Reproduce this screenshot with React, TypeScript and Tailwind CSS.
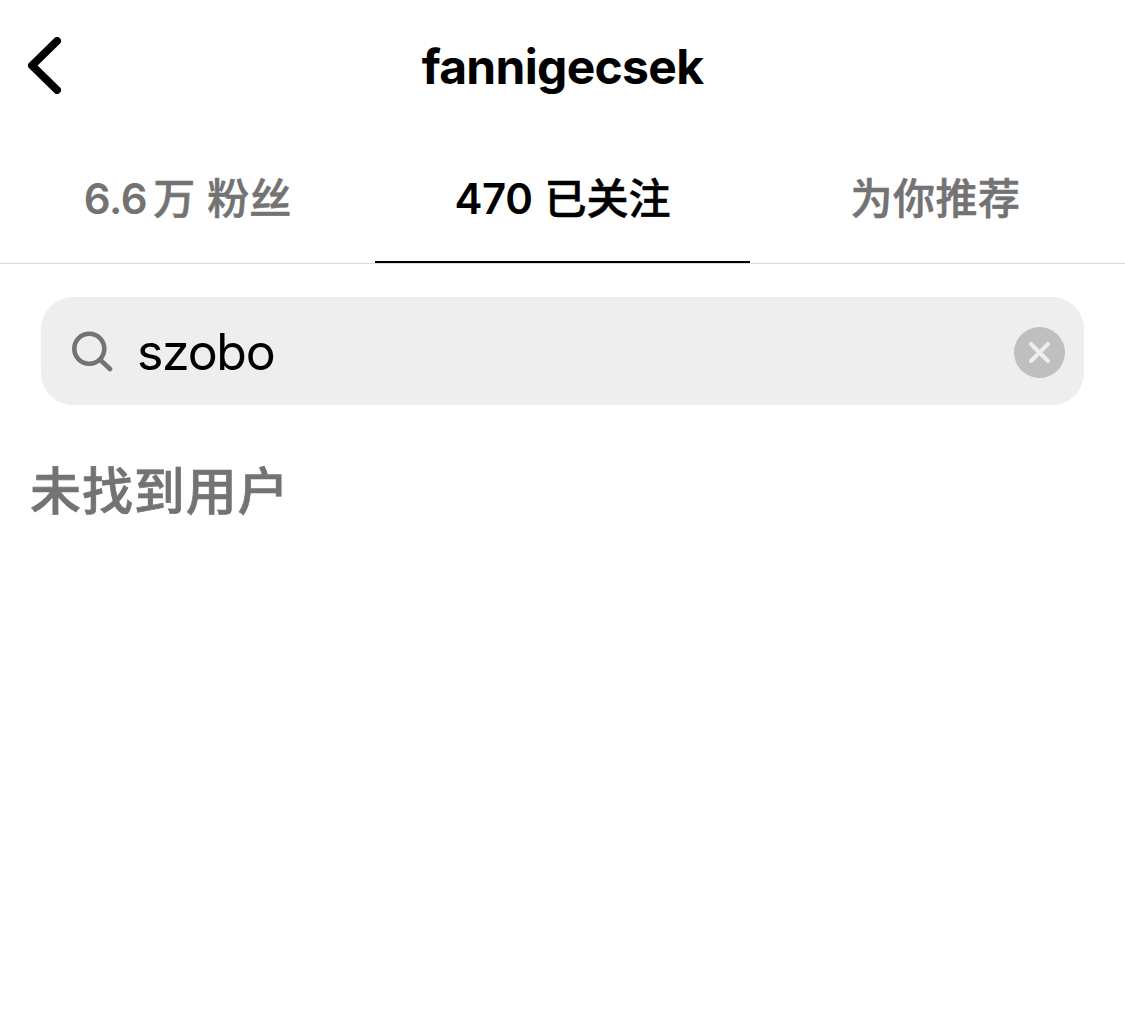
import { useState } from "react";

interface TabProps {
  count?: string;
  unit?: string;
  label: string;
  active: boolean;
  onClick: () => void;
}

const tabs = [
  { id: "followers", count: "6.6", unit: "万", label: "粉丝" },
  { id: "following", count: "470", label: "已关注" },
  { id: "suggested", label: "为你推荐" },
];

function Tab({ count, unit, label, active, onClick }: TabProps) {
  return (
    <button
      onClick={onClick}
      className={
        active
          ? "h-full flex-1 border-b-2 border-black pt-0.5 text-black"
          : "h-full flex-1 border-b-2 border-transparent pt-0.5 text-[#737373]"
      }
    >
      <span className="flex items-baseline justify-center text-[42px] leading-[60px] font-medium whitespace-nowrap">
        {count && (
          <span className="font-semibold tracking-[-0.4px]">{count}</span>
        )}
        {unit && (
          <span className="ml-1.5 [-webkit-text-stroke:0.6px]">{unit}</span>
        )}
        <span
          className={
            count
              ? "ml-3 [-webkit-text-stroke:0.6px]"
              : "-ml-1 tracking-[0.5px] [-webkit-text-stroke:0.6px]"
          }
        >
          {label}
        </span>
      </span>
    </button>
  );
}

function Header({ title }: { title: string }) {
  return (
    <header className="grid h-[134px] grid-cols-[100px_1fr_100px] items-center">
      <button aria-label="返回" className="pb-[3px] pl-7">
        <svg
          width="33"
          height="57"
          viewBox="0 0 33 57"
          fill="none"
          stroke="currentColor"
          strokeWidth="8"
          strokeLinecap="round"
          strokeLinejoin="round"
        >
          <path d="M29 4 4 28.5l25 24.5" />
        </svg>
      </button>
      <h1 className="text-center text-[48px] leading-[60px] font-bold tracking-[-0.7px]">
        {title}
      </h1>
    </header>
  );
}

function SearchBar() {
  const [query, setQuery] = useState("szobo");

  return (
    <div className="mx-[41px] mt-[33px] flex h-[108px] items-center rounded-[32px] bg-[#eeeeee] pt-0.5 pr-[19px] pl-[30px]">
      <svg
        width="42"
        height="42"
        viewBox="0 0 42 42"
        fill="none"
        stroke="#737373"
        strokeWidth="4.6"
        strokeLinecap="round"
        className="shrink-0"
      >
        <circle cx="18.3" cy="17.8" r="15" />
        <path d="m29.5 29 9.5 9" />
      </svg>
      <input
        value={query}
        onChange={(e) => setQuery(e.target.value)}
        className="ml-6 h-[70px] min-w-0 flex-1 bg-transparent text-[50px] tracking-[-1.3px] text-black outline-none"
      />
      <button
        aria-label="清除"
        onClick={() => setQuery("")}
        className="flex size-[51px] shrink-0 items-center justify-center rounded-full bg-[#bfbfbf]"
      >
        <svg
          width="21"
          height="21"
          viewBox="0 0 21 21"
          fill="none"
          stroke="#eeeeee"
          strokeWidth="4"
          strokeLinecap="round"
        >
          <path d="m2 2 17 17M19 2 2 19" />
        </svg>
      </button>
    </div>
  );
}

export default function App() {
  const [activeTab, setActiveTab] = useState("following");

  return (
    <div className="min-h-screen bg-white font-['Inter','Noto_Sans_CJK_SC',sans-serif] text-black">
      <Header title="fannigecsek" />
      <nav className="flex h-[130px] border-b border-[#dbdbdb]">
        {tabs.map((tab) => (
          <Tab
            key={tab.id}
            count={tab.count}
            unit={tab.unit}
            label={tab.label}
            active={activeTab === tab.id}
            onClick={() => setActiveTab(tab.id)}
          />
        ))}
      </nav>
      <SearchBar />
      <p className="mt-[51px] ml-[30px] text-[51px] leading-[72px] font-medium tracking-[0.9px] text-[#737373] [-webkit-text-stroke:0.7px]">
        未找到用户
      </p>
    </div>
  );
}
